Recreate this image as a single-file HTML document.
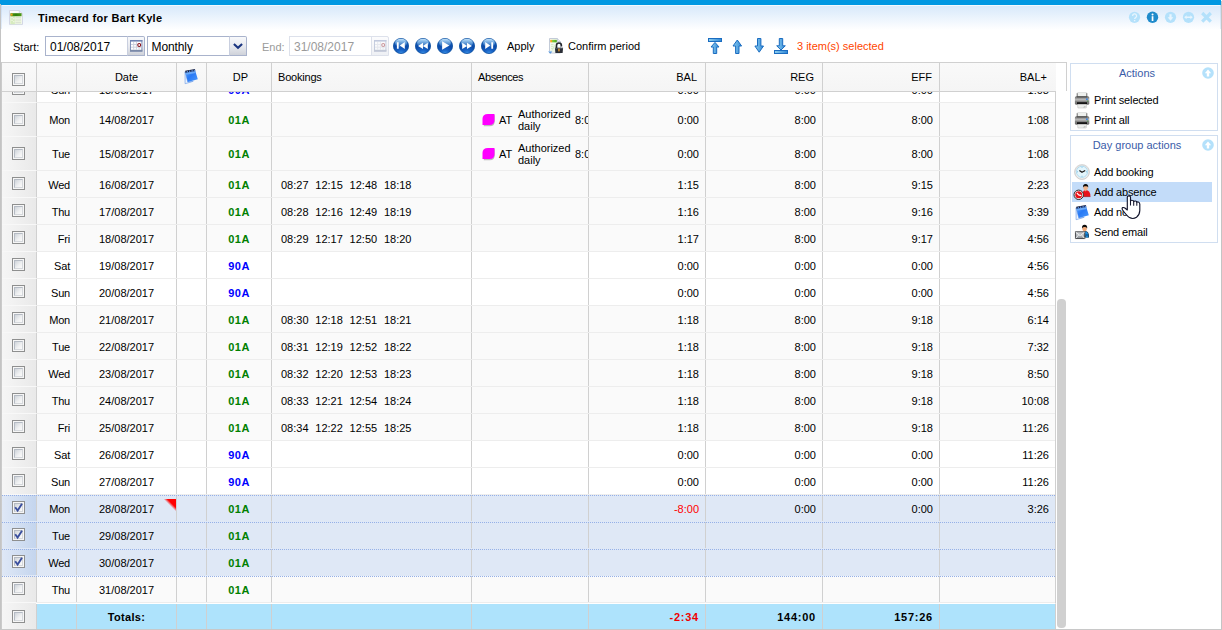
<!DOCTYPE html>
<html><head><meta charset="utf-8"><title>Timecard for Bart Kyle</title>
<style>
html,body{margin:0;padding:0}
body{width:1222px;height:630px;overflow:hidden;position:relative;background:#fff;font-family:"Liberation Sans",sans-serif;font-size:11px;color:#000}
.abs{position:absolute}
#topbar{position:absolute;left:0;top:0;width:1221px;height:5px;background:#0097e2}
#title{position:absolute;left:1px;top:5px;width:1220px;height:25px;background:linear-gradient(#f2f8fe 0,#f2f8fe 1px,#d8e9fb 1px,#fff 100%)}
#title b{position:absolute;left:37px;top:5px;font-size:11px;line-height:16px;white-space:nowrap;letter-spacing:.3px}
#lb{position:absolute;left:0;top:4px;width:1px;height:626px;background:#c4c4c4}
#rb{position:absolute;left:1221px;top:1px;width:1px;height:629px;background:#c4c4c4}
#bb{position:absolute;left:0;top:629px;width:1222px;height:1px;background:#c8c8c8}
.tl{position:absolute;white-space:nowrap;line-height:16px;top:38px}
.inp{position:absolute;top:36px;height:18px;border:1px solid #a9b3cc;background:#fff;box-sizing:content-box}
.inp span{position:absolute;left:4px;top:2px;font-size:12px;line-height:16px;white-space:nowrap}
.trg{position:absolute;top:36px;width:17px;height:18px;border:1px solid #a9b3cc;border-left-color:#c9cfdf;border-radius:0 2px 0 0;background:linear-gradient(#f8f9fb,#e6e8ee 55%,#cfd2d9)}
#hdr{position:absolute;left:2px;top:62px;width:1065px;height:29px;border-top:1px solid #d0d0d0;border-right:1px solid #d0d0d0;box-sizing:border-box;background:#fff}
#hdr .bg{position:absolute;left:0;top:0;width:1054px;height:28px;background:linear-gradient(#f9f9f9,#f5f5f5)}
.hs{position:absolute;top:0;width:1px;height:28px;background:#d0d0d0}
.h{position:absolute;top:6px;line-height:16px;white-space:nowrap}
#body{position:absolute;left:2px;top:91px;width:1054px;height:513px;overflow:hidden;border-top:1px solid #d0d0d0;box-sizing:border-box;border-right:1px solid #d0d0d0}
#rows{position:absolute;left:0;top:-92px;width:1053px}
.row{position:absolute;left:0;width:1053px;border-bottom:1px solid #ededed}
.row.sel{border-bottom:1px solid #dfe8f6}
.dl{position:absolute;left:0;width:1053px;height:1px;background:repeating-linear-gradient(90deg,#95b0e8 0,#95b0e8 1px,transparent 1px,transparent 2px)}
.ck{position:absolute;left:0;top:0;width:34px;background:linear-gradient(90deg,#f6f6f6,#e9e9e9);border-bottom:1px solid #f8f8f8}
.sel .ck{background:linear-gradient(90deg,#dfe8f6,#c4d5ee);border-bottom:none}
.vs{position:absolute;top:0;width:1px;height:100%;background:#d0d0d0}
.c{position:absolute;white-space:nowrap;line-height:16px}
.cb{position:absolute;width:11px;height:11px;border:1px solid #8e8f8f;background:#f6f6f6}
.cb i{position:absolute;left:1px;top:1px;width:7px;height:7px;border:1px solid #b5bbc4;border-right-color:#d5d8dc;border-bottom-color:#d5d8dc;background:linear-gradient(135deg,#cfd4da,#f0f1f2 60%,#fafafa)}
#tot{position:absolute;left:2px;top:603px;width:1053px;height:26px;background:#aee3fc;border-top:1px solid #fff;border-right:1px solid #d0d0d0}
#tot .ck{height:27px;top:-1px;border:none}
.pn{position:absolute;left:1070px;width:146px;border:1px solid #d0def0;background:#fff}
.pn .t{position:absolute;left:0;width:132px;text-align:center;color:#3a5ca8;line-height:16px}
.pi{position:absolute;left:23px;line-height:16px;white-space:nowrap;letter-spacing:-.15px}
</style></head><body>
<svg width="0" height="0" style="position:absolute"><defs>
<radialGradient id="gb" cx=".5" cy="1.05" r="1.05"><stop offset="0" stop-color="#3f97ea"/><stop offset=".3" stop-color="#1761c4"/><stop offset=".6" stop-color="#0c4aa8"/><stop offset="1" stop-color="#1a6ac8"/></radialGradient>
<linearGradient id="gh" x1="0" y1="0" x2="0" y2="1"><stop offset="0" stop-color="#d6f0ff" stop-opacity=".9"/><stop offset="1" stop-color="#8fd0f8" stop-opacity=".15"/></linearGradient>
<linearGradient id="ga" x1="0" y1="0" x2="1" y2="0"><stop offset="0" stop-color="#8fd0f0"/><stop offset="1" stop-color="#2f86d6"/></linearGradient>
<linearGradient id="gp" x1="0" y1="0" x2="0" y2="1"><stop offset="0" stop-color="#5c5c5c"/><stop offset=".2" stop-color="#8e8e8e"/><stop offset=".42" stop-color="#bdbdbd"/><stop offset=".6" stop-color="#858585"/><stop offset="1" stop-color="#6a6a6a"/></linearGradient>
<linearGradient id="gn" x1="0" y1="0" x2="1" y2="1"><stop offset="0" stop-color="#5aa2fa"/><stop offset=".45" stop-color="#2a7af5"/><stop offset="1" stop-color="#4a98fb"/></linearGradient>
<linearGradient id="gg" x1="0" y1="0" x2="1" y2="0"><stop offset="0" stop-color="#4f9a1a"/><stop offset=".5" stop-color="#2f8008"/><stop offset="1" stop-color="#4f9a1a"/></linearGradient>
<linearGradient id="gm" x1="0" y1="0" x2="0" y2="1"><stop offset="0" stop-color="#d4d8dc"/><stop offset="1" stop-color="#8a9096"/></linearGradient>
<linearGradient id="gc" x1="0" y1="0" x2="1" y2="0"><stop offset="0" stop-color="#f5a623"/><stop offset=".22" stop-color="#f5a623"/><stop offset=".3" stop-color="#8fcf3a"/><stop offset="1" stop-color="#4aa520"/></linearGradient>
<linearGradient id="gf" x1="0" y1="1" x2="1" y2="0"><stop offset=".47" stop-color="#ff0000" stop-opacity="0"/><stop offset=".64" stop-color="#ff0000"/></linearGradient>
</defs></svg>
<div id="topbar"></div>
<div id="title"><b>Timecard for Bart Kyle</b></div>
<div class="abs" style="left:1220px;top:5px;width:1px;height:24px;background:linear-gradient(#c9dcf2,#e4eefa)"></div><div class="abs" style="left:1px;top:5px;width:1px;height:24px;background:linear-gradient(#c9dcf2,#e4eefa)"></div><div id="lb"></div><div class="abs" style="left:1px;top:62px;width:1px;height:567px;background:#cbcbcb"></div><div id="rb"></div>
<svg class="abs" style="left:9px;top:10px" width="14" height="15" viewBox="0 0 14 15"><path d="M.5 .5H10.3L13.5 3.7V14.5H.5Z" fill="#fcfdfb" stroke="#d3d7e6" stroke-width="1"/><path d="M10.3 .5V3.7H13.5" fill="#eef0f4" stroke="#d3d7e6"/><rect x="1.4" y="6" width="11.2" height="8.2" fill="#eaf4dd"/><rect x="1.4" y="6" width="4.4" height="8.2" fill="#d6ebbf"/><rect x="1.4" y="3.2" width="11.2" height="3" fill="url(#gg)"/><rect x="1.6" y="3.6" width="2" height="2.1" fill="#f4a21c"/><path d="M2.4 7.6H3.6M2.4 10.4H3.6M4.2 8.6H5.4M4.2 11.6H5.4" stroke="#f2f9e8" stroke-width="1.2"/><path d="M6.6 7.6H12M6.6 10H12M6.6 12.6H12" stroke="#d5dccf" stroke-width=".8"/></svg>
<svg class="abs" style="left:1128px;top:11px" width="13" height="13" viewBox="0 0 13 13"><circle cx="6.5" cy="6.3" r="5.6" fill="#b4e1fb"/><path d="M4.6 5a2 2 0 1 1 3 1.6q-1 .6-1 1.5" fill="none" stroke="#e8f5fe" stroke-width="1.3"/><rect x="5.9" y="9" width="1.4" height="1.3" fill="#e8f5fe"/></svg>
<svg class="abs" style="left:1146px;top:11px" width="13" height="13" viewBox="0 0 13 13"><circle cx="6.5" cy="6.3" r="5.7" fill="#1f8bcb"/><rect x="5.7" y="5.2" width="1.7" height="4.8" fill="#fff"/><circle cx="6.55" cy="3.6" r="1" fill="#fff"/></svg>
<svg class="abs" style="left:1164px;top:11px" width="13" height="13" viewBox="0 0 13 13"><circle cx="6.5" cy="6.3" r="5.6" fill="#b4e1fb"/><path d="M5.4 3.2H7.6V6.2H9.4L6.5 9.8L3.6 6.2H5.4Z" fill="#e8f5fe"/></svg>
<svg class="abs" style="left:1182px;top:11px" width="13" height="13" viewBox="0 0 13 13"><circle cx="6.5" cy="6.3" r="5.6" fill="#b4e1fb"/><path d="M2.2 6.3L4.6 4.3V5.5H8.4V4.3L10.8 6.3L8.4 8.3V7.1H4.6V8.3Z" fill="#e8f5fe"/></svg>
<svg class="abs" style="left:1200px;top:11px" width="13" height="13" viewBox="0 0 13 13"><path d="M2.2 2 L10.8 10.6 M10.8 2 L2.2 10.6" stroke="#b4e1fb" stroke-width="3.2" fill="none"/></svg>
<span class="tl" style="left:13px;top:39px">Start:</span>
<div class="inp" style="left:45px;width:81px"><span>01/08/2017</span></div>
<div class="trg" style="left:127px;width:16px"></div>
<svg class="abs" style="left:130px;top:40px" width="13" height="12" viewBox="0 0 13 12"><rect x=".5" y=".5" width="11.4" height="10.6" fill="#fff" stroke="#7f90b8"/><rect x="0" y="0" width="12.4" height="1.6" fill="#6f83b3"/><rect x="0" y="9.8" width="12.4" height="1.8" fill="#7b8aa8"/><path d="M1 4.5H11.4M1 7.2H11.4M3.7 2V9.8M6.4 2V9.8M9.1 5.5V9.8" stroke="#cdd2de" stroke-width="1" fill="none"/><circle cx="9.2" cy="5" r="1.45" fill="#fff" stroke="#8a0f18" stroke-width="1.1"/></svg>
<div class="inp" style="left:147px;width:81px"><span style="left:3.5px;letter-spacing:-.1px">Monthly</span></div>
<div class="trg" style="left:229px;width:16px"></div>
<svg class="abs" style="left:233px;top:42px" width="10" height="8" viewBox="0 0 10 8"><path d="M.9 2 L5 5.8 L9.1 2" fill="none" stroke="#1b3580" stroke-width="2.1"/></svg>
<span class="tl" style="left:262px;top:39px;color:#9a9a9a">End:</span>
<div class="inp" style="left:289px;width:81px;border-color:#dde1eb"><span style="color:#9a9a9a">31/08/2017</span></div>
<div class="trg" style="left:371px;width:16px;border-color:#dde1eb;background:linear-gradient(#fcfcfd,#eef0f4)"></div>
<svg class="abs" style="left:374px;top:40px" width="13" height="12" viewBox="0 0 13 12" opacity=".4"><rect x=".5" y=".5" width="11.4" height="10.6" fill="#fff" stroke="#7f90b8"/><rect x="0" y="0" width="12.4" height="1.6" fill="#6f83b3"/><rect x="0" y="9.8" width="12.4" height="1.8" fill="#7b8aa8"/><path d="M1 4.5H11.4M1 7.2H11.4M3.7 2V9.8M6.4 2V9.8M9.1 5.5V9.8" stroke="#cdd2de" stroke-width="1" fill="none"/><circle cx="9.2" cy="5" r="1.45" fill="#fff" stroke="#8a0f18" stroke-width="1.1"/></svg>
<svg class="abs" style="left:393px;top:38px" width="16" height="16" viewBox="0 0 16 16"><circle cx="8" cy="8" r="7.6" fill="url(#gb)" stroke="#0d4fa0" stroke-width=".8"/><ellipse cx="8" cy="5" rx="5.9" ry="4.2" fill="url(#gh)"/><g fill="#fff"><path d="M3.9 4.2h1.8v6.6H3.9z M11.8 4.1v6.8L6.8 7.5z"/></g></svg>
<svg class="abs" style="left:415px;top:38px" width="16" height="16" viewBox="0 0 16 16"><circle cx="8" cy="8" r="7.6" fill="url(#gb)" stroke="#0d4fa0" stroke-width=".8"/><ellipse cx="8" cy="5" rx="5.9" ry="4.2" fill="url(#gh)"/><g fill="#fff"><path d="M8 4.8v6.2L3.1 7.9z M12.8 4.8v6.2L7.9 7.9z"/></g></svg>
<svg class="abs" style="left:437px;top:38px" width="16" height="16" viewBox="0 0 16 16"><circle cx="8" cy="8" r="7.6" fill="url(#gb)" stroke="#0d4fa0" stroke-width=".8"/><ellipse cx="8" cy="5" rx="5.9" ry="4.2" fill="url(#gh)"/><g fill="#fff"><path d="M5.1 3.3v8.4L12.3 7.5z"/></g></svg>
<svg class="abs" style="left:459px;top:38px" width="16" height="16" viewBox="0 0 16 16"><circle cx="8" cy="8" r="7.6" fill="url(#gb)" stroke="#0d4fa0" stroke-width=".8"/><ellipse cx="8" cy="5" rx="5.9" ry="4.2" fill="url(#gh)"/><g fill="#fff"><path d="M3.2 4.8v6.2L8.1 7.9z M8 4.8v6.2L12.9 7.9z"/></g></svg>
<svg class="abs" style="left:481px;top:38px" width="16" height="16" viewBox="0 0 16 16"><circle cx="8" cy="8" r="7.6" fill="url(#gb)" stroke="#0d4fa0" stroke-width=".8"/><ellipse cx="8" cy="5" rx="5.9" ry="4.2" fill="url(#gh)"/><g fill="#fff"><path d="M10.3 4.2h1.8v6.6h-1.8z M4.2 4.1v6.8L9.2 7.5z"/></g></svg>
<span class="tl" style="left:507px">Apply</span>
<svg class="abs" style="left:548px;top:38px" width="16" height="17" viewBox="0 0 16 17"><path d="M1.5 .5H9.4L12.5 3.6V15H1.5Z" fill="#fbfcfd" stroke="#c3cbd8" stroke-width="1"/><path d="M9.4 .5V3.6H12.5" fill="#eef1f5" stroke="#c3cbd8" stroke-width="1"/><rect x="2.2" y="1.8" width="6.6" height="2.6" fill="url(#gc)"/><path d="M2.4 5.4H8.6V14H2.4Z" fill="#eef6e6"/><path d="M3 6.5H5.4M3 8.5H5.4M3 10.5H5.4M6 7.4L8.4 9.6M4.2 12.4L6 8.4" stroke="#cfe6c0" stroke-width=".8" fill="none"/><path d="M.2 13.4 H4.4 L2.3 15.8Z" fill="#5c9ae0"/><path d="M.8 13.4 H3.8" stroke="#9cc3ee" stroke-width=".8"/><path d="M8.5 10V7.5a2.45 2.45 0 0 1 4.9 0V8.6" fill="none" stroke="#23262c" stroke-width="1.6"/><path d="M6.9 9.8H15.1L14.6 14.9H7.4Z" fill="#2b2f37"/><path d="M7 9.9H15V11H7Z" fill="#4a4f5a"/><rect x="10.2" y="10.6" width="1.5" height="2.8" fill="#e09a2a"/></svg>
<span class="tl" style="left:568px">Confirm period</span>
<svg class="abs" style="left:706px;top:36px" width="18" height="20" viewBox="0 0 18 20"><rect x="2.5" y="2.5" width="13" height="3" fill="url(#ga)" stroke="#1a6cc0" stroke-width="1" stroke-linejoin="miter"/><path d="M9 6.4 L13 11 H10.7 V17.5 H7.3 V11 H5 Z" fill="url(#ga)" stroke="#1a6cc0" stroke-width="1" stroke-linejoin="miter"/></svg>
<svg class="abs" style="left:728px;top:36px" width="18" height="20" viewBox="0 0 18 20"><path d="M9.3 4 L13.6 10 H11 V17.5 H7.6 V10 H5 Z" fill="url(#ga)" stroke="#1a6cc0" stroke-width="1" stroke-linejoin="miter"/></svg>
<svg class="abs" style="left:750px;top:36px" width="18" height="20" viewBox="0 0 18 20"><path d="M9.2 16.2 L13.5 10 H10.9 V2.5 H7.5 V10 H4.9 Z" fill="url(#ga)" stroke="#1a6cc0" stroke-width="1" stroke-linejoin="miter"/></svg>
<svg class="abs" style="left:772px;top:36px" width="18" height="20" viewBox="0 0 18 20"><path d="M9 14 L13.3 9.8 H10.7 V2.5 H7.3 V9.8 H4.7 Z" fill="url(#ga)" stroke="#1a6cc0" stroke-width="1" stroke-linejoin="miter"/><rect x="2.5" y="14.5" width="13" height="3" fill="url(#ga)" stroke="#1a6cc0" stroke-width="1" stroke-linejoin="miter"/></svg>
<span class="tl" style="left:797px;color:#ff4500">3 item(s) selected</span>
<div id="hdr"><div class="bg"></div><b class="hs" style="left:34px"></b><b class="hs" style="left:74px"></b><b class="hs" style="left:174px"></b><b class="hs" style="left:204px"></b><b class="hs" style="left:269px"></b><b class="hs" style="left:469px"></b><b class="hs" style="left:586px"></b><b class="hs" style="left:703px"></b><b class="hs" style="left:820px"></b><b class="hs" style="left:937px"></b>
<div class="cb" style="left:10px;top:10px"><i></i></div>
<span class="h" style="left:75px;width:99px;text-align:center">Date</span>
<span class="h" style="left:206px;width:65px;text-align:center">DP</span>
<span class="h" style="left:276px;letter-spacing:-.2px">Bookings</span>
<span class="h" style="left:476px;letter-spacing:-.4px">Absences</span>
<span class="h" style="left:615px;width:80px;text-align:right">BAL</span>
<span class="h" style="left:732px;width:80px;text-align:right">REG</span>
<span class="h" style="left:850px;width:80px;text-align:right">EFF</span>
<span class="h" style="left:965px;width:80px;text-align:right">BAL+</span>
<svg class="abs" style="left:181px;top:4px" width="16" height="18" viewBox="0 0 16 18"><path d="M2.1 4.8 L2.1 16.7 L10.2 14.3 L4.8 15 Z" fill="#f0f5fd" stroke="#7fa9ea" stroke-width=".8" stroke-linejoin="round"/><path d="M2.3 5.2 L12.2 3.7 L14.8 12.2 L4.8 15.1 Z" fill="url(#gn)"/><path d="M2.3 5.4 L12.2 3.9 L12.9 6 L2.9 7.8 Z" fill="#6aa9f7"/><path d="M2.2 3.7 L12 2.1 L12.3 4.1 L2.4 5.8 Z" fill="#141c3c"/><path d="M4.3 5.6V3.9M6.7 5.2V3.5M9.1 4.8V3.1M11.3 4.4V2.8" stroke="#5b93ea" stroke-width="1.15"/></svg>
</div>
<div id="body"><div id="rows">
<div class="row" style="top:76px;height:26px;background:#ffffff">
<div class="ck" style="height:26px"></div>
<b class="vs" style="left:34px"></b>
<b class="vs" style="left:74px"></b>
<b class="vs" style="left:174px"></b>
<b class="vs" style="left:204px"></b>
<b class="vs" style="left:269px"></b>
<b class="vs" style="left:469px"></b>
<b class="vs" style="left:586px"></b>
<b class="vs" style="left:703px"></b>
<b class="vs" style="left:820px"></b>
<b class="vs" style="left:937px"></b>
<div class="cb" style="left:10px;top:6px"><i></i></div>
<span class="c" style="left:34px;width:34px;text-align:right;top:6px;letter-spacing:-.2px">Sun</span>
<span class="c" style="left:75px;width:99px;text-align:center;top:6px">13/08/2017</span>
<span class="c" style="left:205px;width:64px;text-align:center;top:6px;font-weight:bold;letter-spacing:.5px;color:#0000ff">90A</span>
<span class="c" style="left:617px;width:80px;text-align:right;top:6px">0:00</span>
<span class="c" style="left:734px;width:80px;text-align:right;top:6px">0:00</span>
<span class="c" style="left:851px;width:80px;text-align:right;top:6px">0:00</span>
<span class="c" style="left:967px;width:80px;text-align:right;top:6px">1:08</span>
</div>
<div class="row" style="top:103px;height:33px;background:#fafafa">
<div class="ck" style="height:33px"></div>
<b class="vs" style="left:34px"></b>
<b class="vs" style="left:74px"></b>
<b class="vs" style="left:174px"></b>
<b class="vs" style="left:204px"></b>
<b class="vs" style="left:269px"></b>
<b class="vs" style="left:469px"></b>
<b class="vs" style="left:586px"></b>
<b class="vs" style="left:703px"></b>
<b class="vs" style="left:820px"></b>
<b class="vs" style="left:937px"></b>
<div class="cb" style="left:10px;top:10px"><i></i></div>
<span class="c" style="left:34px;width:34px;text-align:right;top:9px;letter-spacing:-.2px">Mon</span>
<span class="c" style="left:75px;width:99px;text-align:center;top:9px">14/08/2017</span>
<span class="c" style="left:205px;width:64px;text-align:center;top:9px;font-weight:bold;letter-spacing:.5px;color:#008000">01A</span>
<svg width="14" height="14" viewBox="0 0 14 14" style="position:absolute;left:480px;top:10px"><path d="M6 1.5 H12 V7.5 Q12 12.5 7 12.5 H1 V6.5 Q1 1.5 6 1.5 Z" fill="#888" opacity=".55" transform="translate(.8 .8)"/><path d="M6 1 H12.5 V7 Q12.5 12 7.5 12 H0.5 V6 Q0.5 1 6 1 Z" fill="#ff00ff"/></svg>
<span class="c" style="left:497px;top:9px">AT</span>
<span class="c" style="left:516px;top:5px;line-height:12px;white-space:normal;width:54px">Authorized<br>daily</span>
<span class="c" style="left:573px;top:9px;width:13px;overflow:hidden">8:00</span>
<span class="c" style="left:617px;width:80px;text-align:right;top:9px">0:00</span>
<span class="c" style="left:734px;width:80px;text-align:right;top:9px">8:00</span>
<span class="c" style="left:851px;width:80px;text-align:right;top:9px">8:00</span>
<span class="c" style="left:967px;width:80px;text-align:right;top:9px">1:08</span>
</div>
<div class="row" style="top:137px;height:33px;background:#fafafa">
<div class="ck" style="height:33px"></div>
<b class="vs" style="left:34px"></b>
<b class="vs" style="left:74px"></b>
<b class="vs" style="left:174px"></b>
<b class="vs" style="left:204px"></b>
<b class="vs" style="left:269px"></b>
<b class="vs" style="left:469px"></b>
<b class="vs" style="left:586px"></b>
<b class="vs" style="left:703px"></b>
<b class="vs" style="left:820px"></b>
<b class="vs" style="left:937px"></b>
<div class="cb" style="left:10px;top:10px"><i></i></div>
<span class="c" style="left:34px;width:34px;text-align:right;top:9px;letter-spacing:-.2px">Tue</span>
<span class="c" style="left:75px;width:99px;text-align:center;top:9px">15/08/2017</span>
<span class="c" style="left:205px;width:64px;text-align:center;top:9px;font-weight:bold;letter-spacing:.5px;color:#008000">01A</span>
<svg width="14" height="14" viewBox="0 0 14 14" style="position:absolute;left:480px;top:10px"><path d="M6 1.5 H12 V7.5 Q12 12.5 7 12.5 H1 V6.5 Q1 1.5 6 1.5 Z" fill="#888" opacity=".55" transform="translate(.8 .8)"/><path d="M6 1 H12.5 V7 Q12.5 12 7.5 12 H0.5 V6 Q0.5 1 6 1 Z" fill="#ff00ff"/></svg>
<span class="c" style="left:497px;top:9px">AT</span>
<span class="c" style="left:516px;top:5px;line-height:12px;white-space:normal;width:54px">Authorized<br>daily</span>
<span class="c" style="left:573px;top:9px;width:13px;overflow:hidden">8:00</span>
<span class="c" style="left:617px;width:80px;text-align:right;top:9px">0:00</span>
<span class="c" style="left:734px;width:80px;text-align:right;top:9px">8:00</span>
<span class="c" style="left:851px;width:80px;text-align:right;top:9px">8:00</span>
<span class="c" style="left:967px;width:80px;text-align:right;top:9px">1:08</span>
</div>
<div class="row" style="top:171px;height:26px;background:#fafafa">
<div class="ck" style="height:26px"></div>
<b class="vs" style="left:34px"></b>
<b class="vs" style="left:74px"></b>
<b class="vs" style="left:174px"></b>
<b class="vs" style="left:204px"></b>
<b class="vs" style="left:269px"></b>
<b class="vs" style="left:469px"></b>
<b class="vs" style="left:586px"></b>
<b class="vs" style="left:703px"></b>
<b class="vs" style="left:820px"></b>
<b class="vs" style="left:937px"></b>
<div class="cb" style="left:10px;top:6px"><i></i></div>
<span class="c" style="left:34px;width:34px;text-align:right;top:6px;letter-spacing:-.2px">Wed</span>
<span class="c" style="left:75px;width:99px;text-align:center;top:6px">16/08/2017</span>
<span class="c" style="left:205px;width:64px;text-align:center;top:6px;font-weight:bold;letter-spacing:.5px;color:#008000">01A</span>
<span class="c" style="left:279.0px;top:6px">08:27</span>
<span class="c" style="left:313.3px;top:6px">12:15</span>
<span class="c" style="left:347.6px;top:6px">12:48</span>
<span class="c" style="left:381.9px;top:6px">18:18</span>
<span class="c" style="left:617px;width:80px;text-align:right;top:6px">1:15</span>
<span class="c" style="left:734px;width:80px;text-align:right;top:6px">8:00</span>
<span class="c" style="left:851px;width:80px;text-align:right;top:6px">9:15</span>
<span class="c" style="left:967px;width:80px;text-align:right;top:6px">2:23</span>
</div>
<div class="row" style="top:198px;height:26px;background:#fafafa">
<div class="ck" style="height:26px"></div>
<b class="vs" style="left:34px"></b>
<b class="vs" style="left:74px"></b>
<b class="vs" style="left:174px"></b>
<b class="vs" style="left:204px"></b>
<b class="vs" style="left:269px"></b>
<b class="vs" style="left:469px"></b>
<b class="vs" style="left:586px"></b>
<b class="vs" style="left:703px"></b>
<b class="vs" style="left:820px"></b>
<b class="vs" style="left:937px"></b>
<div class="cb" style="left:10px;top:6px"><i></i></div>
<span class="c" style="left:34px;width:34px;text-align:right;top:6px;letter-spacing:-.2px">Thu</span>
<span class="c" style="left:75px;width:99px;text-align:center;top:6px">17/08/2017</span>
<span class="c" style="left:205px;width:64px;text-align:center;top:6px;font-weight:bold;letter-spacing:.5px;color:#008000">01A</span>
<span class="c" style="left:279.0px;top:6px">08:28</span>
<span class="c" style="left:313.3px;top:6px">12:16</span>
<span class="c" style="left:347.6px;top:6px">12:49</span>
<span class="c" style="left:381.9px;top:6px">18:19</span>
<span class="c" style="left:617px;width:80px;text-align:right;top:6px">1:16</span>
<span class="c" style="left:734px;width:80px;text-align:right;top:6px">8:00</span>
<span class="c" style="left:851px;width:80px;text-align:right;top:6px">9:16</span>
<span class="c" style="left:967px;width:80px;text-align:right;top:6px">3:39</span>
</div>
<div class="row" style="top:225px;height:26px;background:#fafafa">
<div class="ck" style="height:26px"></div>
<b class="vs" style="left:34px"></b>
<b class="vs" style="left:74px"></b>
<b class="vs" style="left:174px"></b>
<b class="vs" style="left:204px"></b>
<b class="vs" style="left:269px"></b>
<b class="vs" style="left:469px"></b>
<b class="vs" style="left:586px"></b>
<b class="vs" style="left:703px"></b>
<b class="vs" style="left:820px"></b>
<b class="vs" style="left:937px"></b>
<div class="cb" style="left:10px;top:6px"><i></i></div>
<span class="c" style="left:34px;width:34px;text-align:right;top:6px;letter-spacing:-.2px">Fri</span>
<span class="c" style="left:75px;width:99px;text-align:center;top:6px">18/08/2017</span>
<span class="c" style="left:205px;width:64px;text-align:center;top:6px;font-weight:bold;letter-spacing:.5px;color:#008000">01A</span>
<span class="c" style="left:279.0px;top:6px">08:29</span>
<span class="c" style="left:313.3px;top:6px">12:17</span>
<span class="c" style="left:347.6px;top:6px">12:50</span>
<span class="c" style="left:381.9px;top:6px">18:20</span>
<span class="c" style="left:617px;width:80px;text-align:right;top:6px">1:17</span>
<span class="c" style="left:734px;width:80px;text-align:right;top:6px">8:00</span>
<span class="c" style="left:851px;width:80px;text-align:right;top:6px">9:17</span>
<span class="c" style="left:967px;width:80px;text-align:right;top:6px">4:56</span>
</div>
<div class="row" style="top:252px;height:26px;background:#ffffff">
<div class="ck" style="height:26px"></div>
<b class="vs" style="left:34px"></b>
<b class="vs" style="left:74px"></b>
<b class="vs" style="left:174px"></b>
<b class="vs" style="left:204px"></b>
<b class="vs" style="left:269px"></b>
<b class="vs" style="left:469px"></b>
<b class="vs" style="left:586px"></b>
<b class="vs" style="left:703px"></b>
<b class="vs" style="left:820px"></b>
<b class="vs" style="left:937px"></b>
<div class="cb" style="left:10px;top:6px"><i></i></div>
<span class="c" style="left:34px;width:34px;text-align:right;top:6px;letter-spacing:-.2px">Sat</span>
<span class="c" style="left:75px;width:99px;text-align:center;top:6px">19/08/2017</span>
<span class="c" style="left:205px;width:64px;text-align:center;top:6px;font-weight:bold;letter-spacing:.5px;color:#0000ff">90A</span>
<span class="c" style="left:617px;width:80px;text-align:right;top:6px">0:00</span>
<span class="c" style="left:734px;width:80px;text-align:right;top:6px">0:00</span>
<span class="c" style="left:851px;width:80px;text-align:right;top:6px">0:00</span>
<span class="c" style="left:967px;width:80px;text-align:right;top:6px">4:56</span>
</div>
<div class="row" style="top:279px;height:26px;background:#ffffff">
<div class="ck" style="height:26px"></div>
<b class="vs" style="left:34px"></b>
<b class="vs" style="left:74px"></b>
<b class="vs" style="left:174px"></b>
<b class="vs" style="left:204px"></b>
<b class="vs" style="left:269px"></b>
<b class="vs" style="left:469px"></b>
<b class="vs" style="left:586px"></b>
<b class="vs" style="left:703px"></b>
<b class="vs" style="left:820px"></b>
<b class="vs" style="left:937px"></b>
<div class="cb" style="left:10px;top:6px"><i></i></div>
<span class="c" style="left:34px;width:34px;text-align:right;top:6px;letter-spacing:-.2px">Sun</span>
<span class="c" style="left:75px;width:99px;text-align:center;top:6px">20/08/2017</span>
<span class="c" style="left:205px;width:64px;text-align:center;top:6px;font-weight:bold;letter-spacing:.5px;color:#0000ff">90A</span>
<span class="c" style="left:617px;width:80px;text-align:right;top:6px">0:00</span>
<span class="c" style="left:734px;width:80px;text-align:right;top:6px">0:00</span>
<span class="c" style="left:851px;width:80px;text-align:right;top:6px">0:00</span>
<span class="c" style="left:967px;width:80px;text-align:right;top:6px">4:56</span>
</div>
<div class="row" style="top:306px;height:26px;background:#fafafa">
<div class="ck" style="height:26px"></div>
<b class="vs" style="left:34px"></b>
<b class="vs" style="left:74px"></b>
<b class="vs" style="left:174px"></b>
<b class="vs" style="left:204px"></b>
<b class="vs" style="left:269px"></b>
<b class="vs" style="left:469px"></b>
<b class="vs" style="left:586px"></b>
<b class="vs" style="left:703px"></b>
<b class="vs" style="left:820px"></b>
<b class="vs" style="left:937px"></b>
<div class="cb" style="left:10px;top:6px"><i></i></div>
<span class="c" style="left:34px;width:34px;text-align:right;top:6px;letter-spacing:-.2px">Mon</span>
<span class="c" style="left:75px;width:99px;text-align:center;top:6px">21/08/2017</span>
<span class="c" style="left:205px;width:64px;text-align:center;top:6px;font-weight:bold;letter-spacing:.5px;color:#008000">01A</span>
<span class="c" style="left:279.0px;top:6px">08:30</span>
<span class="c" style="left:313.3px;top:6px">12:18</span>
<span class="c" style="left:347.6px;top:6px">12:51</span>
<span class="c" style="left:381.9px;top:6px">18:21</span>
<span class="c" style="left:617px;width:80px;text-align:right;top:6px">1:18</span>
<span class="c" style="left:734px;width:80px;text-align:right;top:6px">8:00</span>
<span class="c" style="left:851px;width:80px;text-align:right;top:6px">9:18</span>
<span class="c" style="left:967px;width:80px;text-align:right;top:6px">6:14</span>
</div>
<div class="row" style="top:333px;height:26px;background:#fafafa">
<div class="ck" style="height:26px"></div>
<b class="vs" style="left:34px"></b>
<b class="vs" style="left:74px"></b>
<b class="vs" style="left:174px"></b>
<b class="vs" style="left:204px"></b>
<b class="vs" style="left:269px"></b>
<b class="vs" style="left:469px"></b>
<b class="vs" style="left:586px"></b>
<b class="vs" style="left:703px"></b>
<b class="vs" style="left:820px"></b>
<b class="vs" style="left:937px"></b>
<div class="cb" style="left:10px;top:6px"><i></i></div>
<span class="c" style="left:34px;width:34px;text-align:right;top:6px;letter-spacing:-.2px">Tue</span>
<span class="c" style="left:75px;width:99px;text-align:center;top:6px">22/08/2017</span>
<span class="c" style="left:205px;width:64px;text-align:center;top:6px;font-weight:bold;letter-spacing:.5px;color:#008000">01A</span>
<span class="c" style="left:279.0px;top:6px">08:31</span>
<span class="c" style="left:313.3px;top:6px">12:19</span>
<span class="c" style="left:347.6px;top:6px">12:52</span>
<span class="c" style="left:381.9px;top:6px">18:22</span>
<span class="c" style="left:617px;width:80px;text-align:right;top:6px">1:18</span>
<span class="c" style="left:734px;width:80px;text-align:right;top:6px">8:00</span>
<span class="c" style="left:851px;width:80px;text-align:right;top:6px">9:18</span>
<span class="c" style="left:967px;width:80px;text-align:right;top:6px">7:32</span>
</div>
<div class="row" style="top:360px;height:26px;background:#fafafa">
<div class="ck" style="height:26px"></div>
<b class="vs" style="left:34px"></b>
<b class="vs" style="left:74px"></b>
<b class="vs" style="left:174px"></b>
<b class="vs" style="left:204px"></b>
<b class="vs" style="left:269px"></b>
<b class="vs" style="left:469px"></b>
<b class="vs" style="left:586px"></b>
<b class="vs" style="left:703px"></b>
<b class="vs" style="left:820px"></b>
<b class="vs" style="left:937px"></b>
<div class="cb" style="left:10px;top:6px"><i></i></div>
<span class="c" style="left:34px;width:34px;text-align:right;top:6px;letter-spacing:-.2px">Wed</span>
<span class="c" style="left:75px;width:99px;text-align:center;top:6px">23/08/2017</span>
<span class="c" style="left:205px;width:64px;text-align:center;top:6px;font-weight:bold;letter-spacing:.5px;color:#008000">01A</span>
<span class="c" style="left:279.0px;top:6px">08:32</span>
<span class="c" style="left:313.3px;top:6px">12:20</span>
<span class="c" style="left:347.6px;top:6px">12:53</span>
<span class="c" style="left:381.9px;top:6px">18:23</span>
<span class="c" style="left:617px;width:80px;text-align:right;top:6px">1:18</span>
<span class="c" style="left:734px;width:80px;text-align:right;top:6px">8:00</span>
<span class="c" style="left:851px;width:80px;text-align:right;top:6px">9:18</span>
<span class="c" style="left:967px;width:80px;text-align:right;top:6px">8:50</span>
</div>
<div class="row" style="top:387px;height:26px;background:#fafafa">
<div class="ck" style="height:26px"></div>
<b class="vs" style="left:34px"></b>
<b class="vs" style="left:74px"></b>
<b class="vs" style="left:174px"></b>
<b class="vs" style="left:204px"></b>
<b class="vs" style="left:269px"></b>
<b class="vs" style="left:469px"></b>
<b class="vs" style="left:586px"></b>
<b class="vs" style="left:703px"></b>
<b class="vs" style="left:820px"></b>
<b class="vs" style="left:937px"></b>
<div class="cb" style="left:10px;top:6px"><i></i></div>
<span class="c" style="left:34px;width:34px;text-align:right;top:6px;letter-spacing:-.2px">Thu</span>
<span class="c" style="left:75px;width:99px;text-align:center;top:6px">24/08/2017</span>
<span class="c" style="left:205px;width:64px;text-align:center;top:6px;font-weight:bold;letter-spacing:.5px;color:#008000">01A</span>
<span class="c" style="left:279.0px;top:6px">08:33</span>
<span class="c" style="left:313.3px;top:6px">12:21</span>
<span class="c" style="left:347.6px;top:6px">12:54</span>
<span class="c" style="left:381.9px;top:6px">18:24</span>
<span class="c" style="left:617px;width:80px;text-align:right;top:6px">1:18</span>
<span class="c" style="left:734px;width:80px;text-align:right;top:6px">8:00</span>
<span class="c" style="left:851px;width:80px;text-align:right;top:6px">9:18</span>
<span class="c" style="left:967px;width:80px;text-align:right;top:6px">10:08</span>
</div>
<div class="row" style="top:414px;height:26px;background:#fafafa">
<div class="ck" style="height:26px"></div>
<b class="vs" style="left:34px"></b>
<b class="vs" style="left:74px"></b>
<b class="vs" style="left:174px"></b>
<b class="vs" style="left:204px"></b>
<b class="vs" style="left:269px"></b>
<b class="vs" style="left:469px"></b>
<b class="vs" style="left:586px"></b>
<b class="vs" style="left:703px"></b>
<b class="vs" style="left:820px"></b>
<b class="vs" style="left:937px"></b>
<div class="cb" style="left:10px;top:6px"><i></i></div>
<span class="c" style="left:34px;width:34px;text-align:right;top:6px;letter-spacing:-.2px">Fri</span>
<span class="c" style="left:75px;width:99px;text-align:center;top:6px">25/08/2017</span>
<span class="c" style="left:205px;width:64px;text-align:center;top:6px;font-weight:bold;letter-spacing:.5px;color:#008000">01A</span>
<span class="c" style="left:279.0px;top:6px">08:34</span>
<span class="c" style="left:313.3px;top:6px">12:22</span>
<span class="c" style="left:347.6px;top:6px">12:55</span>
<span class="c" style="left:381.9px;top:6px">18:25</span>
<span class="c" style="left:617px;width:80px;text-align:right;top:6px">1:18</span>
<span class="c" style="left:734px;width:80px;text-align:right;top:6px">8:00</span>
<span class="c" style="left:851px;width:80px;text-align:right;top:6px">9:18</span>
<span class="c" style="left:967px;width:80px;text-align:right;top:6px">11:26</span>
</div>
<div class="row" style="top:441px;height:26px;background:#ffffff">
<div class="ck" style="height:26px"></div>
<b class="vs" style="left:34px"></b>
<b class="vs" style="left:74px"></b>
<b class="vs" style="left:174px"></b>
<b class="vs" style="left:204px"></b>
<b class="vs" style="left:269px"></b>
<b class="vs" style="left:469px"></b>
<b class="vs" style="left:586px"></b>
<b class="vs" style="left:703px"></b>
<b class="vs" style="left:820px"></b>
<b class="vs" style="left:937px"></b>
<div class="cb" style="left:10px;top:6px"><i></i></div>
<span class="c" style="left:34px;width:34px;text-align:right;top:6px;letter-spacing:-.2px">Sat</span>
<span class="c" style="left:75px;width:99px;text-align:center;top:6px">26/08/2017</span>
<span class="c" style="left:205px;width:64px;text-align:center;top:6px;font-weight:bold;letter-spacing:.5px;color:#0000ff">90A</span>
<span class="c" style="left:617px;width:80px;text-align:right;top:6px">0:00</span>
<span class="c" style="left:734px;width:80px;text-align:right;top:6px">0:00</span>
<span class="c" style="left:851px;width:80px;text-align:right;top:6px">0:00</span>
<span class="c" style="left:967px;width:80px;text-align:right;top:6px">11:26</span>
</div>
<div class="row" style="top:468px;height:26px;background:#ffffff">
<div class="ck" style="height:26px"></div>
<b class="vs" style="left:34px"></b>
<b class="vs" style="left:74px"></b>
<b class="vs" style="left:174px"></b>
<b class="vs" style="left:204px"></b>
<b class="vs" style="left:269px"></b>
<b class="vs" style="left:469px"></b>
<b class="vs" style="left:586px"></b>
<b class="vs" style="left:703px"></b>
<b class="vs" style="left:820px"></b>
<b class="vs" style="left:937px"></b>
<div class="cb" style="left:10px;top:6px"><i></i></div>
<span class="c" style="left:34px;width:34px;text-align:right;top:6px;letter-spacing:-.2px">Sun</span>
<span class="c" style="left:75px;width:99px;text-align:center;top:6px">27/08/2017</span>
<span class="c" style="left:205px;width:64px;text-align:center;top:6px;font-weight:bold;letter-spacing:.5px;color:#0000ff">90A</span>
<span class="c" style="left:617px;width:80px;text-align:right;top:6px">0:00</span>
<span class="c" style="left:734px;width:80px;text-align:right;top:6px">0:00</span>
<span class="c" style="left:851px;width:80px;text-align:right;top:6px">0:00</span>
<span class="c" style="left:967px;width:80px;text-align:right;top:6px">11:26</span>
</div>
<div class="row sel" style="top:495px;height:26px;background:#dfe8f6">
<div class="ck" style="height:26px"></div>
<b class="vs" style="left:34px"></b>
<b class="vs" style="left:74px"></b>
<b class="vs" style="left:174px"></b>
<b class="vs" style="left:204px"></b>
<b class="vs" style="left:269px"></b>
<b class="vs" style="left:469px"></b>
<b class="vs" style="left:586px"></b>
<b class="vs" style="left:703px"></b>
<b class="vs" style="left:820px"></b>
<b class="vs" style="left:937px"></b>
<div class="cb" style="left:10px;top:6px"><i></i><svg width="13" height="13" viewBox="0 0 13 13" style="position:absolute;left:-1px;top:-1px"><path d="M3.2 6.2 L5.6 9.6 L10 2.8" fill="none" stroke="#3a4f9e" stroke-width="1.9" stroke-linecap="butt"/></svg></div>
<span class="c" style="left:34px;width:34px;text-align:right;top:6px;letter-spacing:-.2px">Mon</span>
<span class="c" style="left:75px;width:99px;text-align:center;top:6px">28/08/2017</span>
<span class="c" style="left:205px;width:64px;text-align:center;top:6px;font-weight:bold;letter-spacing:.5px;color:#008000">01A</span>
<svg width="12" height="12" style="position:absolute;left:162px;top:4px"><rect width="12" height="12" fill="url(#gf)"/></svg>
<span class="c" style="left:617px;width:80px;text-align:right;top:6px;color:#ff0000">-8:00</span>
<span class="c" style="left:734px;width:80px;text-align:right;top:6px">0:00</span>
<span class="c" style="left:851px;width:80px;text-align:right;top:6px">0:00</span>
<span class="c" style="left:967px;width:80px;text-align:right;top:6px">3:26</span>
</div>
<div class="row sel" style="top:522px;height:26px;background:#dfe8f6">
<div class="ck" style="height:26px"></div>
<b class="vs" style="left:34px"></b>
<b class="vs" style="left:74px"></b>
<b class="vs" style="left:174px"></b>
<b class="vs" style="left:204px"></b>
<b class="vs" style="left:269px"></b>
<b class="vs" style="left:469px"></b>
<b class="vs" style="left:586px"></b>
<b class="vs" style="left:703px"></b>
<b class="vs" style="left:820px"></b>
<b class="vs" style="left:937px"></b>
<div class="cb" style="left:10px;top:6px"><i></i><svg width="13" height="13" viewBox="0 0 13 13" style="position:absolute;left:-1px;top:-1px"><path d="M3.2 6.2 L5.6 9.6 L10 2.8" fill="none" stroke="#3a4f9e" stroke-width="1.9" stroke-linecap="butt"/></svg></div>
<span class="c" style="left:34px;width:34px;text-align:right;top:6px;letter-spacing:-.2px">Tue</span>
<span class="c" style="left:75px;width:99px;text-align:center;top:6px">29/08/2017</span>
<span class="c" style="left:205px;width:64px;text-align:center;top:6px;font-weight:bold;letter-spacing:.5px;color:#008000">01A</span>
</div>
<div class="row sel" style="top:549px;height:26px;background:#dfe8f6">
<div class="ck" style="height:26px"></div>
<b class="vs" style="left:34px"></b>
<b class="vs" style="left:74px"></b>
<b class="vs" style="left:174px"></b>
<b class="vs" style="left:204px"></b>
<b class="vs" style="left:269px"></b>
<b class="vs" style="left:469px"></b>
<b class="vs" style="left:586px"></b>
<b class="vs" style="left:703px"></b>
<b class="vs" style="left:820px"></b>
<b class="vs" style="left:937px"></b>
<div class="cb" style="left:10px;top:6px"><i></i><svg width="13" height="13" viewBox="0 0 13 13" style="position:absolute;left:-1px;top:-1px"><path d="M3.2 6.2 L5.6 9.6 L10 2.8" fill="none" stroke="#3a4f9e" stroke-width="1.9" stroke-linecap="butt"/></svg></div>
<span class="c" style="left:34px;width:34px;text-align:right;top:6px;letter-spacing:-.2px">Wed</span>
<span class="c" style="left:75px;width:99px;text-align:center;top:6px">30/08/2017</span>
<span class="c" style="left:205px;width:64px;text-align:center;top:6px;font-weight:bold;letter-spacing:.5px;color:#008000">01A</span>
</div>
<div class="row" style="top:576px;height:26px;background:#fafafa">
<div class="ck" style="height:26px"></div>
<b class="vs" style="left:34px"></b>
<b class="vs" style="left:74px"></b>
<b class="vs" style="left:174px"></b>
<b class="vs" style="left:204px"></b>
<b class="vs" style="left:269px"></b>
<b class="vs" style="left:469px"></b>
<b class="vs" style="left:586px"></b>
<b class="vs" style="left:703px"></b>
<b class="vs" style="left:820px"></b>
<b class="vs" style="left:937px"></b>
<div class="cb" style="left:10px;top:6px"><i></i></div>
<span class="c" style="left:34px;width:34px;text-align:right;top:6px;letter-spacing:-.2px">Thu</span>
<span class="c" style="left:75px;width:99px;text-align:center;top:6px">31/08/2017</span>
<span class="c" style="left:205px;width:64px;text-align:center;top:6px;font-weight:bold;letter-spacing:.5px;color:#008000">01A</span>
</div>
<div class="dl" style="top:495px"></div>
<div class="dl" style="top:522px"></div>
<div class="dl" style="top:549px"></div>
<div class="dl" style="top:576px"></div>
</div></div>
<div id="tot"><div class="ck"></div><b class="vs" style="left:34px"></b><b class="vs" style="left:74px"></b><b class="vs" style="left:174px"></b><b class="vs" style="left:204px"></b><b class="vs" style="left:269px"></b><b class="vs" style="left:469px"></b><b class="vs" style="left:586px"></b><b class="vs" style="left:703px"></b><b class="vs" style="left:820px"></b><b class="vs" style="left:937px"></b>
<div class="cb" style="left:10px;top:6px"><i></i></div>
<span class="c" style="left:75px;width:99px;text-align:center;top:5px;font-weight:bold;letter-spacing:.3px">Totals:</span>
<span class="c" style="left:617px;width:80px;text-align:right;top:5px;font-weight:bold;letter-spacing:.75px;color:#f00000">-2:34</span>
<span class="c" style="left:734px;width:80px;text-align:right;top:5px;font-weight:bold;letter-spacing:.75px">144:00</span>
<span class="c" style="left:851px;width:80px;text-align:right;top:5px;font-weight:bold;letter-spacing:.75px">157:26</span>
</div>
<div class="abs" style="left:1057px;top:299px;width:9px;height:329px;border-radius:4px;background:#d0d0d0"></div>
<div class="pn" style="top:63px;height:66px">
<span class="t" style="top:1px">Actions</span><svg class="abs" style="left:131px;top:3px" width="12" height="12" viewBox="0 0 12 12"><circle cx="6" cy="6" r="5.8" fill="#b4e1fb"/><path d="M6 2.6 L9.2 6.3 H7.2 V9.4 H4.8 V6.3 H2.8 Z" fill="#fff"/></svg>
<svg class="abs" style="left:3px;top:28px" width="16" height="17" viewBox="0 0 16 17"><path d="M3.2 5V.4H12.8V5Z" fill="#eef0ee"/><path d="M3.2 5V1.2M12.8 5V1.2" stroke="#5e5e5e" stroke-width=".9"/><path d="M3.4 .5H12.6" stroke="#d5d7d5" stroke-width=".6"/><rect x=".9" y="4.2" width="14.4" height="8.6" rx="1.6" fill="url(#gp)"/><path d="M3 4.9H13" stroke="#4a4a4a" stroke-width="1"/><rect x="3" y="10.3" width="10" height="2" fill="#050505"/><path d="M3.5 12.3H12.6L12.2 16H3.9Z" fill="#eceeec" stroke="#bbb" stroke-width=".5"/><path d="M9.6 15.2L11.4 14.6" stroke="#999" stroke-width=".7"/><rect x="12" y="6.4" width="1.8" height="1.7" fill="#3d86dd"/><rect x="13.2" y="8.6" width="1" height="1" fill="#3a9a3a"/></svg>
<span class="pi" style="top:28px">Print selected</span>
<svg class="abs" style="left:3px;top:48px" width="16" height="17" viewBox="0 0 16 17"><path d="M3.2 5V.4H12.8V5Z" fill="#eef0ee"/><path d="M3.2 5V1.2M12.8 5V1.2" stroke="#5e5e5e" stroke-width=".9"/><path d="M3.4 .5H12.6" stroke="#d5d7d5" stroke-width=".6"/><rect x=".9" y="4.2" width="14.4" height="8.6" rx="1.6" fill="url(#gp)"/><path d="M3 4.9H13" stroke="#4a4a4a" stroke-width="1"/><rect x="3" y="10.3" width="10" height="2" fill="#050505"/><path d="M3.5 12.3H12.6L12.2 16H3.9Z" fill="#eceeec" stroke="#bbb" stroke-width=".5"/><path d="M9.6 15.2L11.4 14.6" stroke="#999" stroke-width=".7"/><rect x="12" y="6.4" width="1.8" height="1.7" fill="#3d86dd"/><rect x="13.2" y="8.6" width="1" height="1" fill="#3a9a3a"/></svg>
<span class="pi" style="top:48px">Print all</span>
</div>
<div class="pn" style="top:135px;height:106px">
<span class="t" style="top:1px">Day group actions</span><svg class="abs" style="left:131px;top:3px" width="12" height="12" viewBox="0 0 12 12"><circle cx="6" cy="6" r="5.8" fill="#b4e1fb"/><path d="M6 2.6 L9.2 6.3 H7.2 V9.4 H4.8 V6.3 H2.8 Z" fill="#fff"/></svg>
<div class="abs" style="left:1px;top:46px;width:140px;height:20px;background:#c3dcf9"></div>
<svg class="abs" style="left:3px;top:28px" width="16" height="16" viewBox="0 0 16 16"><circle cx="8" cy="8" r="7.5" fill="#f2f2f2" stroke="#d2d2d2" stroke-width=".8"/><circle cx="8" cy="8.2" r="7" fill="none" stroke="#c4c4c4" stroke-width=".5"/><circle cx="8" cy="7.8" r="5.6" fill="#e3f5fc" stroke="#a9d9ef" stroke-width=".9"/><path d="M8 2.8V3.8M8 11.8V12.8M3 7.8H4M12 7.8H13" stroke="#6bb7dc" stroke-width=".8"/><path d="M5.4 6.4 L8 8.3 L11.2 6.5" fill="none" stroke="#1c1c1c" stroke-width="1.3" stroke-linejoin="round"/></svg>
<span class="pi" style="top:28px">Add booking</span>
<svg class="abs" style="left:2px;top:47px" width="18" height="18" viewBox="0 0 18 18"><path d="M9.3 13.6 Q9 7.4 12.6 7 Q17.6 7.4 17.4 13.6 Z" fill="#e8111a"/><path d="M9.3 13.6 H17.4" stroke="#a30d12" stroke-width=".7"/><ellipse cx="12.6" cy="4.6" rx="2.3" ry="2.8" fill="#f0b48c"/><path d="M10 4.6 Q9.6 1 12.6 1 Q15.6 1 15.2 4.6 Q14.6 2.8 12.6 3.2 Q10.6 2.8 10 4.6Z" fill="#0c0c0c"/><path d="M11.6 7.2 L12.6 8.6 L13.6 7.2Z" fill="#f0b48c"/><circle cx="5.7" cy="11.8" r="4.7" fill="#fff" stroke="#2c2c2c" stroke-width="1"/><circle cx="5.7" cy="11.8" r="3.5" fill="#e8111a"/><path d="M3.9 10 L5.7 11.9 L8.3 12.6" fill="none" stroke="#fff" stroke-width="1.1"/></svg>
<span class="pi" style="top:48px">Add absence</span>
<svg class="abs" style="left:3px;top:67.2px" width="16" height="18" viewBox="0 0 16 18"><path d="M2.1 4.8 L2.1 16.7 L10.2 14.3 L4.8 15 Z" fill="#f0f5fd" stroke="#7fa9ea" stroke-width=".8" stroke-linejoin="round"/><path d="M2.3 5.2 L12.2 3.7 L14.8 12.2 L4.8 15.1 Z" fill="url(#gn)"/><path d="M2.3 5.4 L12.2 3.9 L12.9 6 L2.9 7.8 Z" fill="#6aa9f7"/><path d="M2.2 3.7 L12 2.1 L12.3 4.1 L2.4 5.8 Z" fill="#141c3c"/><path d="M4.3 5.6V3.9M6.7 5.2V3.5M9.1 4.8V3.1M11.3 4.4V2.8" stroke="#5b93ea" stroke-width="1.15"/></svg>
<span class="pi" style="top:68px">Add note</span>
<svg class="abs" style="left:3px;top:88px" width="16" height="16" viewBox="0 0 16 16"><path d="M9.4 13.6 Q9 7.2 11.2 7 Q15.4 7.4 15 13.6 Z" fill="#10202e"/><path d="M10.6 7.6 L11.6 13.4 H14.4 Q14.6 9 12.6 7.6 Z" fill="#1f8fe0"/><rect x="11.6" y="10" width="2.4" height="2.2" fill="#0d68b0"/><ellipse cx="10.6" cy="4.4" rx="2.3" ry="2.8" fill="#f0a878"/><path d="M8 4.6 Q7.6 .8 10.6 .8 Q13.6 .8 13.2 4.6 Q12.6 2.6 10.6 3 Q8.6 2.6 8 4.6Z" fill="#0c0c0c"/><rect x="1.4" y="7.8" width="9.4" height="6.8" fill="url(#gm)" stroke="#3c3f42" stroke-width=".9"/><path d="M1.6 8.2 L6.1 11.6 L10.6 8.2 M1.6 14.4 L4.6 11 M10.6 14.4 L7.6 11" fill="none" stroke="#f4f4f4" stroke-width=".9"/></svg>
<span class="pi" style="top:88px">Send email</span>
</div>
<svg class="abs" style="left:1120px;top:194px" width="22" height="27" viewBox="0 0 22 27"><path d="M 7.3 15.0 V 3.0 Q 7.3 1.8 8.9 1.8 Q 10.5 1.8 10.5 3.0 V 7.0 Q 11.0 6.2 12.1 6.3 Q 13.6 6.4 13.7 7.6 Q 14.3 6.9 15.3 7.0 Q 16.7 7.2 16.8 8.4 Q 17.4 7.8 18.3 8.0 Q 19.7 8.4 19.8 10.0 V 16.5 Q 19.6 21.0 16.5 23.3 Q 13.0 25.5 9.5 23.6 Q 6.5 21.5 2.6 16.0 Q 1.5 14.3 2.8 13.6 Q 4.0 13.2 5.2 14.2 L 7.3 16.0 Z" fill="#fff" stroke="#12142c" stroke-width="1.15" stroke-linejoin="round"/><path d="M 10.5 7.0 V 11.6 M 13.7 7.6 V 11.7 M 16.8 8.4 V 11.8" stroke="#12142c" stroke-width="1.05" fill="none"/></svg>
<div id="bb"></div>
</body></html>
